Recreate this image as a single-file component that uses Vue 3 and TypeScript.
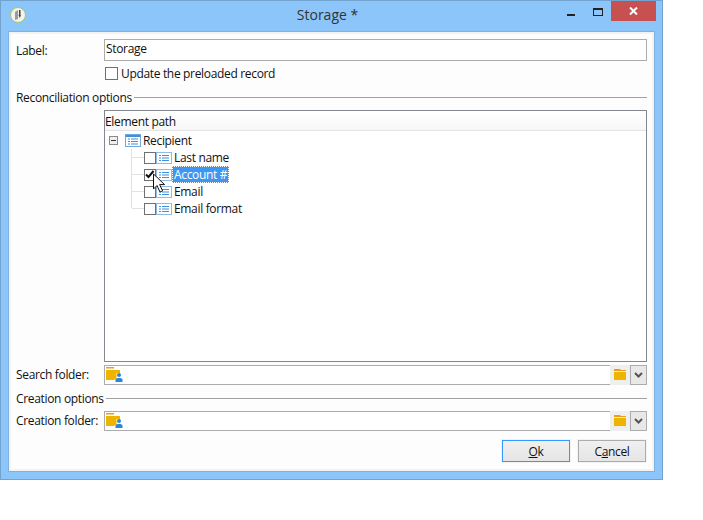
<script setup lang="ts">
const fields = ['Last name', 'Account #', 'Email', 'Email format'];
</script>

<template>
  <div class="window">
    <div class="titlebar">
      <svg class="app-icon" width="16" height="16" viewBox="0 0 16 16">
        <circle cx="8" cy="8" r="7.500" fill="#f2f2ee" stroke="#a8c468" />
        <path d="M5 5l3-2v9l-3 1z" fill="#9a9a9a" />
        <path d="M9 3h1.500v5H9zM8.500 8h2.500l-1.200 3z" fill="#444" />
      </svg>
      <div class="title">Storage *</div>
      <div class="controls">
        <span class="minimize" />
        <span class="maximize" />
        <span class="close">
          <svg width="9" height="8" viewBox="0 0 9 8">
            <path d="M1 .5l7 7M8 .5l-7 7" stroke="#fff" stroke-width="2" fill="none" />
          </svg>
        </span>
      </div>
    </div>

    <div class="body">
      <div class="row label-row">
        <label class="label">Label:</label>
        <div class="input">Storage</div>
      </div>
      <div class="update-row">
        <span class="check" />
        <span>Update the preloaded record</span>
      </div>

      <div class="section recon"><span>Reconciliation options</span><i /></div>

      <div class="tree-box">
        <div class="tree-head">Element path</div>
        <div class="tree">
          <div class="root">
            <span class="expander" />
            <svg class="node-icon root-icon" width="16" height="13" viewBox="0 0 16 13">
              <rect x=".5" y=".5" width="15" height="12" fill="#fff" stroke="#6fa8dc" />
              <rect x="1" y="1" width="14" height="2" fill="#3f8fdc" />
              <path d="M3 5h2M6 5h7M3 7.500h2M6 7.500h7M3 10h2M6 10h7" stroke="#3f8fdc" />
            </svg>
            <span class="node-text">Recipient</span>
          </div>
          <div class="children">
            <div v-for="(f, i) in fields" :key="f" class="node">
              <span class="branch" />
              <span class="check" :class="{ checked: i === 1 }">
                <svg v-if="i === 1" width="10" height="9" viewBox="0 0 10 9">
                  <path d="M1 4.500l2.500 2.500 5-6" stroke="#111" stroke-width="2" fill="none" />
                </svg>
              </span>
              <svg class="node-icon" width="16" height="12" viewBox="0 0 16 12">
                <rect x=".5" y=".5" width="15" height="11" fill="#fff" stroke="#8fbce6" />
                <path d="M3 3.500h2M6 3.500h7M3 6h2M6 6h7M3 8.500h2M6 8.500h7" stroke="#3f8fdc" />
              </svg>
              <span class="node-text" :class="{ selected: i === 1 }">{{ f }}</span>
            </div>
          </div>
          <svg class="cursor" width="14" height="21" viewBox="0 0 14 21">
            <path d="M1.500 1v15l3.500-3.500 3 6.500 2.600-1.200-3-6.200h5z" fill="#fff" stroke="#111" />
          </svg>
        </div>
      </div>

      <div class="row folder-row">
        <label class="label">Search folder:</label>
        <div class="input folder-input">
          <svg class="folder-user" width="17" height="16" viewBox="0 0 17 16">
            <path d="M0 0h8v1.500H0z" fill="#f09a1c" />
            <path d="M0 3h14v10H0z" fill="#eeb400" />
            <path d="M10.500 6h5v9h-7v-3h2z" fill="#fff" />
            <circle cx="13" cy="8" r="2" fill="#2a87d8" />
            <path d="M9.500 15v-3l2-1h3l2 1v3z" fill="#2a87d8" />
          </svg>
        </div>
        <span class="folder-btn">
          <svg width="12" height="12" viewBox="0 0 12 12">
            <path d="M0 0h6l1 1h5v1H0z" fill="#f09a1c" />
            <path d="M0 3h12v8H0z" fill="#eeb400" />
          </svg>
        </span>
        <span class="drop">
          <svg width="9" height="7" viewBox="0 0 9 7">
            <path d="M1 1l3.500 3.500L8 1" stroke="#555" stroke-width="2" fill="none" />
          </svg>
        </span>
      </div>

      <div class="section creation"><span>Creation options</span><i /></div>

      <div class="row folder-row">
        <label class="label">Creation folder:</label>
        <div class="input folder-input">
          <svg class="folder-user" width="17" height="16" viewBox="0 0 17 16">
            <path d="M0 0h8v1.500H0z" fill="#f09a1c" />
            <path d="M0 3h14v10H0z" fill="#eeb400" />
            <path d="M10.500 6h5v9h-7v-3h2z" fill="#fff" />
            <circle cx="13" cy="8" r="2" fill="#2a87d8" />
            <path d="M9.500 15v-3l2-1h3l2 1v3z" fill="#2a87d8" />
          </svg>
        </div>
        <span class="folder-btn">
          <svg width="12" height="12" viewBox="0 0 12 12">
            <path d="M0 0h6l1 1h5v1H0z" fill="#f09a1c" />
            <path d="M0 3h12v8H0z" fill="#eeb400" />
          </svg>
        </span>
        <span class="drop">
          <svg width="9" height="7" viewBox="0 0 9 7">
            <path d="M1 1l3.500 3.500L8 1" stroke="#555" stroke-width="2" fill="none" />
          </svg>
        </span>
      </div>

      <div class="actions">
        <button class="btn primary"><u>O</u>k</button>
        <button class="btn">C<u>a</u>ncel</button>
      </div>
    </div>
  </div>
</template>

<style>
html,
body {
  background: #fff;
}
</style>

<style scoped>
.window {
  box-sizing: border-box;
  width: 663px;
  height: 480px;
  padding: 0 7px 7px;
  background: #8bc5f9;
  border: 1px solid #72a2d0;
  font-family: 'Open Sans', 'Noto Sans', sans-serif;
  font-size: 12px;
  letter-spacing: -0.33px;
  color: #111;
  display: flex;
  flex-direction: column;
}

.titlebar {
  height: 30px;
  flex: none;
  position: relative;
  display: flex;
  align-items: center;
}

.app-icon {
  margin: -2px 0 0 2px;
}

.title {
  position: absolute;
  left: 0;
  right: 8px;
  top: 4px;
  text-align: center;
  font-size: 14px;
  letter-spacing: 0;
  color: #333;
}

.controls {
  position: absolute;
  right: -1px;
  top: 0;
  display: flex;
  align-items: flex-start;
}

.minimize {
  width: 8px;
  height: 2px;
  margin-top: 13px;
  margin-right: 18px;
  background: #222;
}

.maximize {
  box-sizing: border-box;
  width: 10px;
  height: 8px;
  margin-top: 7px;
  margin-right: 8px;
  border: 1px solid #222;
  border-top-width: 2px;
}

.close {
  width: 45px;
  height: 20px;
  background: #c75050;
  display: flex;
  align-items: center;
  justify-content: center;
}

.body {
  flex: 1;
  box-sizing: border-box;
  padding: 7px;
  background: #fdfdfd;
  border: 1px solid #7fb0de;
  box-shadow: inset 0 0 0 2px #f3f3f3;
  display: flex;
  flex-direction: column;
}

.row {
  display: flex;
  align-items: center;
}

.label {
  width: 88px;
  flex: none;
}

.input {
  box-sizing: border-box;
  flex: 1;
  height: 22px;
  padding-left: 1px;
  line-height: 18px;
  background: #fff;
  border: 1px solid #acacac;
}

.update-row {
  display: flex;
  align-items: center;
  gap: 3px;
  height: 14px;
  margin: 5px 0 0 88px;
  padding-left: 1px;
}

.check {
  box-sizing: border-box;
  display: flex;
  align-items: center;
  justify-content: center;
  flex: none;
  width: 13px;
  height: 13px;
  background: #fff;
  border: 1px solid #707070;
}

.section {
  display: flex;
  align-items: center;
  gap: 2px;
  height: 16px;
}

.section i {
  flex: 1;
  height: 1px;
  background: #a0a0a0;
}

.recon {
  margin-top: 9px;
}

.creation {
  margin: 5px 0;
}

.tree-box {
  box-sizing: border-box;
  height: 252px;
  margin: 5px 0 3px 88px;
  background: #fff;
  border: 1px solid #828790;
}

.tree-head {
  box-sizing: border-box;
  height: 20px;
  padding-top: 1px;
  line-height: 20px;
  background: linear-gradient(#fff, #f7f7f7);
  border-bottom: 1px solid #e3e3e3;
}

.tree {
  position: relative;
  padding: 1px 0 0 4px;
}

.root {
  display: flex;
  align-items: center;
  height: 17px;
}

.expander {
  box-sizing: border-box;
  position: relative;
  width: 9px;
  height: 9px;
  margin-right: 7px;
  background: #f0f0f0;
  border: 1px solid #8a8a8a;
}

.expander::after {
  content: '';
  position: absolute;
  left: 1px;
  right: 1px;
  top: 3px;
  height: 1px;
  background: #333;
}

.children {
  margin-left: 22px;
  border-left: 1px solid #e2e2e2;
  height: 59px;
}

.node {
  display: flex;
  align-items: center;
  height: 17px;
}

.branch {
  width: 12px;
  height: 1px;
  flex: none;
  background: #e2e2e2;
}

.node .check {
  width: 12px;
  height: 12px;
}

.node-icon {
  flex: none;
}

.node-text {
  padding: 0 2px;
  line-height: 17px;
}

.selected {
  color: #fff;
  background: #3d96f0;
  outline: 1px dotted #fff;
  outline-offset: -1px;
}

.cursor {
  position: absolute;
  left: 47px;
  top: 42px;
}

.folder-row {
  height: 20px;
}

.folder-row .label {
  margin-bottom: 2px;
}

.folder-row .input {
  height: 20px;
  padding: 0;
  border-right: none;
}

.folder-user {
  display: block;
  margin: 1px 0 0 1px;
}

.folder-btn {
  flex: none;
  width: 20px;
  height: 20px;
  background: #efefef;
  display: flex;
  align-items: center;
  justify-content: center;
}

.drop {
  flex: none;
  box-sizing: border-box;
  width: 17px;
  height: 20px;
  background: #e8e8e8;
  border: 1px solid #acacac;
  display: flex;
  align-items: center;
  justify-content: center;
}

.actions {
  display: flex;
  justify-content: flex-end;
  gap: 8px;
  margin-top: 9px;
  padding-right: 1px;
}

.btn {
  box-sizing: border-box;
  width: 68px;
  height: 22px;
  padding: 0;
  font: inherit;
  letter-spacing: inherit;
  color: #111;
  background: linear-gradient(#f0f0f0, #e5e5e5);
  border: 1px solid #acacac;
  box-shadow: 0 0 0 1px #f2f2f2;
}

.primary {
  border-color: #3399ff;
}
</style>
